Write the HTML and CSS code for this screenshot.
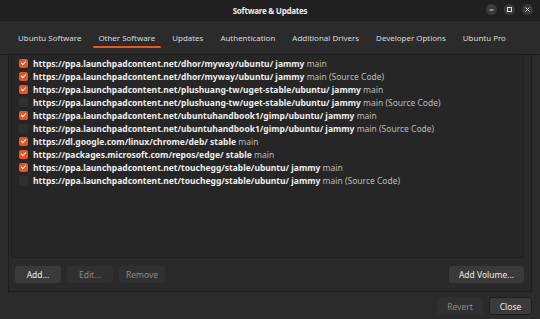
FILE: index.html
```html
<!DOCTYPE html>
<html>
<head>
<meta charset="utf-8">
<link rel="stylesheet" href="styles.css">
</head>
<body>
<div class="window">
  <div class="titlebar">
    <div class="title">Software &amp; Updates</div>
    <div class="wbtns">
      <span class="wbtn"><svg width="11" height="11" viewBox="0 0 11 11"><path d="M3.5 6h4" stroke="#e0e0e0" stroke-width="1"/></svg></span>
      <span class="wbtn"><svg width="11" height="11" viewBox="0 0 11 11"><rect x="3.5" y="3.5" width="4" height="4" fill="none" stroke="#e0e0e0" stroke-width="1"/></svg></span>
      <span class="wbtn"><svg width="11" height="11" viewBox="0 0 11 11"><path d="M3.5 3.5l4 4M7.5 3.5l-4 4" stroke="#e0e0e0" stroke-width="1"/></svg></span>
    </div>
  </div>
  <div class="tabs">
    <span class="tab">Ubuntu Software</span>
    <span class="tab active">Other Software</span>
    <span class="tab">Updates</span>
    <span class="tab">Authentication</span>
    <span class="tab">Additional Drivers</span>
    <span class="tab">Developer Options</span>
    <span class="tab">Ubuntu Pro</span>
  </div>
  <div class="page">
    <div class="list">
      <div class="row"><span class="cb on"></span><b>https://ppa.launchpadcontent.net/dhor/myway/ubuntu/ jammy</b> main</div>
      <div class="row"><span class="cb on"></span><b>https://ppa.launchpadcontent.net/dhor/myway/ubuntu/ jammy</b> main (Source Code)</div>
      <div class="row"><span class="cb on"></span><b>https://ppa.launchpadcontent.net/plushuang-tw/uget-stable/ubuntu/ jammy</b> main</div>
      <div class="row"><span class="cb"></span><b>https://ppa.launchpadcontent.net/plushuang-tw/uget-stable/ubuntu/ jammy</b> main (Source Code)</div>
      <div class="row"><span class="cb on"></span><b>https://ppa.launchpadcontent.net/ubuntuhandbook1/gimp/ubuntu/ jammy</b> main</div>
      <div class="row"><span class="cb"></span><b>https://ppa.launchpadcontent.net/ubuntuhandbook1/gimp/ubuntu/ jammy</b> main (Source Code)</div>
      <div class="row"><span class="cb on"></span><b>https://dl.google.com/linux/chrome/deb/ stable</b> main</div>
      <div class="row"><span class="cb on"></span><b>https://packages.microsoft.com/repos/edge/ stable</b> main</div>
      <div class="row"><span class="cb on"></span><b>https://ppa.launchpadcontent.net/touchegg/stable/ubuntu/ jammy</b> main</div>
      <div class="row"><span class="cb"></span><b>https://ppa.launchpadcontent.net/touchegg/stable/ubuntu/ jammy</b> main (Source Code)</div>
    </div>
    <div class="actions">
      <span class="btn">Add...</span>
      <span class="btn dis">Edit...</span>
      <span class="btn dis">Remove</span>
      <span class="spacer"></span>
      <span class="btn vol">Add Volume...</span>
    </div>
  </div>
  <div class="footer">
    <span class="btn dis fb">Revert</span>
    <span class="btn fb close">Close</span>
  </div>
</div>
</body>
</html>
```
FILE: styles.css
```css
* { box-sizing: border-box; }
html, body { margin: 0; padding: 0; }
body {
  width: 540px; height: 319px; overflow: hidden;
  background: #2b2b2b;
  font-family: "Noto Sans", "DejaVu Sans", sans-serif;
  color: #e6e6e6;
}
.window { display: flex; flex-direction: column; height: 319px; }
.titlebar {
  height: 21px; background: #202020;
  border-bottom: 1px solid #1a1a1a;
  display: flex; align-items: center; justify-content: center;
  position: relative;
}
.title { font-size: 8px; font-weight: bold; color: #ececec; letter-spacing: -0.25px; }
.wbtns { position: absolute; right: 7px; top: 4px; display: flex; gap: 7px; }
.wbtn { width: 11px; height: 11px; border-radius: 50%; background: #3a3a3a; display: block; }
.wbtn svg { display: block; }
.tabs {
  height: 34px; display: flex; align-items: center;
  padding-left: 9.5px; gap: 0;
  border-bottom: 1px solid #1e1e1e;
  white-space: nowrap;
}
.tab { font-size: 7.95px; padding: 0 8.5px; color: #dcdcdc; position: relative; line-height: 34px; white-space: nowrap; flex: none; }
.tab.active::after {
  content: ""; position: absolute; left: 3px; right: 3px; bottom: 7px; height: 2px;
  background: #e95420; border-radius: 1px;
}
.page {
  margin: 0 8px; height: 237px;
  border: 1px solid #1e1e1e; border-top: 0;
  background: #2a2a2a;
  display: flex; flex-direction: column;
}
.list {
  margin: 0 7px 0 2px; height: 203px; background: #262626;
  border: 1px solid #202020; border-top: 0;
  padding: 2px 0 0 7px;
}
.row { height: 13px; display: flex; align-items: center; font-size: 8.5px; color: #bdbdbd; white-space: pre; }
.row b { color: #eeeeee; font-weight: bold; }
.cb { width: 9px; height: 9px; border-radius: 2px; background: #303030; margin-right: 5px; flex: none; }
.cb.on { background: #e95420; position: relative; }
.cb.on::after {
  content: ""; position: absolute; left: 3px; top: 1px; width: 2px; height: 4px;
  border: solid #fff; border-width: 0 1.5px 1.5px 0; transform: rotate(45deg);
}
.actions { display: flex; align-items: center; padding: 8px 7px 0 6px; gap: 6px; }
.spacer { flex: 1; }
.btn {
  height: 17px; display: flex; align-items: center; justify-content: center;
  font-size: 8.5px; background: #3a3a3a; border-radius: 3px; color: #ececec;
  width: 46px;
}
.btn.dis { background: #303030; color: #8a8a8a; }
.btn.vol { width: 75px; }
.footer { display: flex; justify-content: flex-end; gap: 6px; padding: 5px 8px 0 0; }
.fb { height: 18px; }
.close { width: 43px; border: 1px solid #1e1e1e; }
```
